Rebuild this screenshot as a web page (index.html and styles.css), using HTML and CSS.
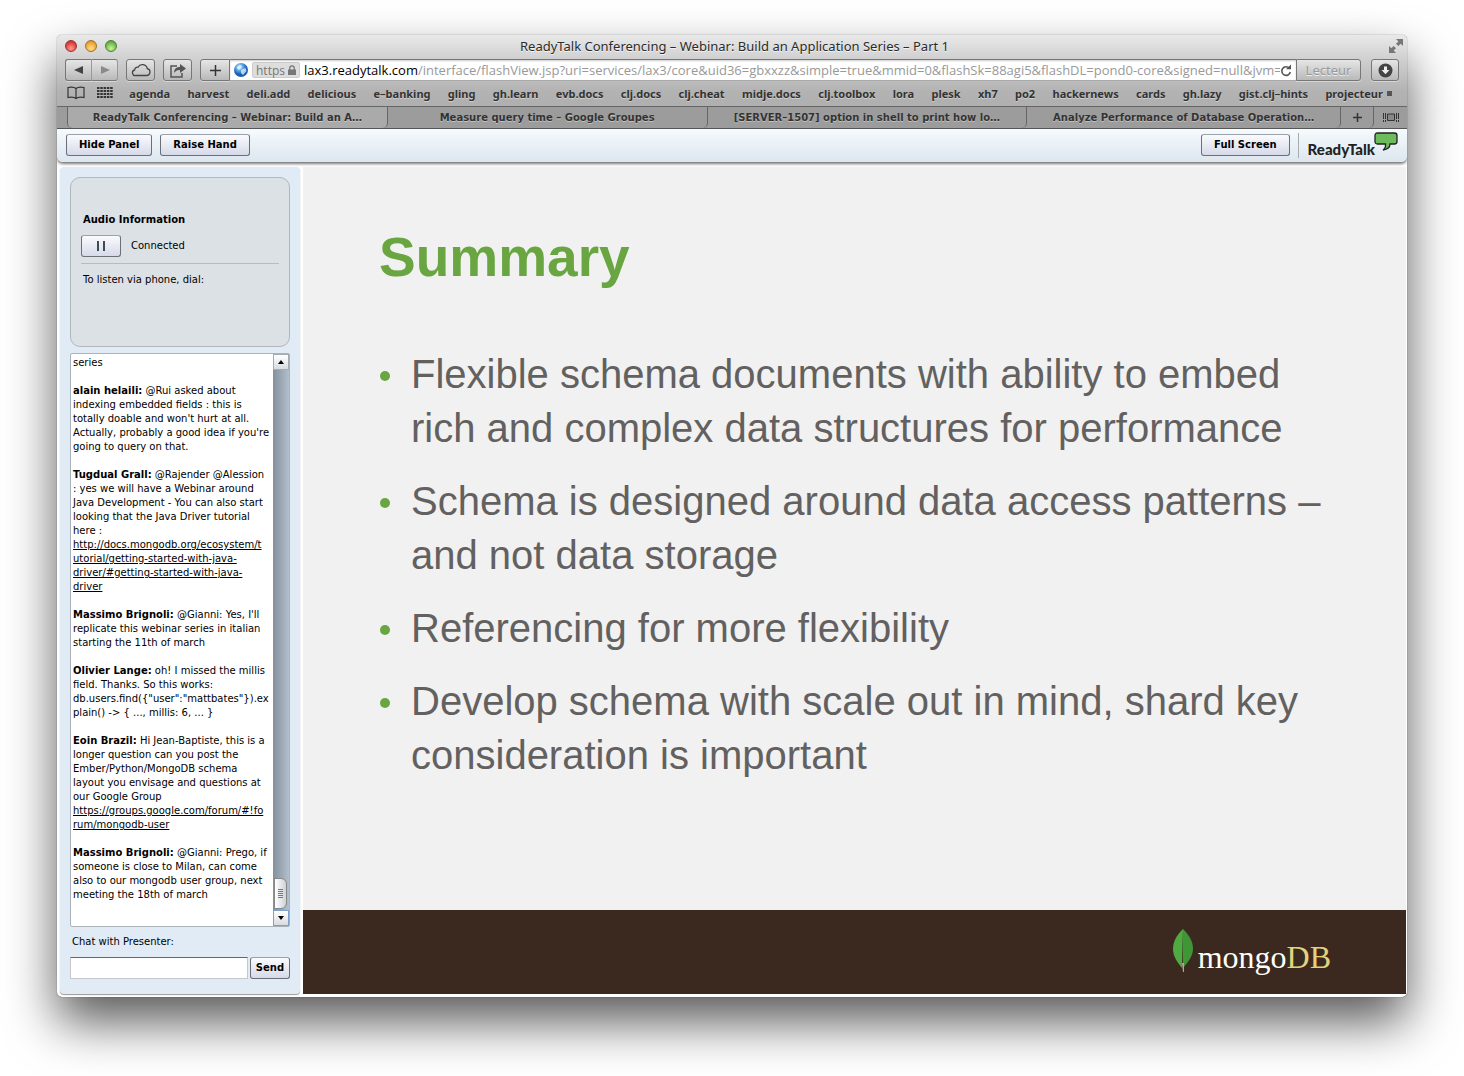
FILE: index.html
```html
<!DOCTYPE html>
<html lang="en">
<head>
<meta charset="utf-8">
<title>ReadyTalk Conferencing – Webinar: Build an Application Series – Part 1</title>
<link rel="stylesheet" href="styles.css">
</head>
<body>
<div class="window">
  <header class="chrome">
    <div class="titlebar">
      <div class="lights"><button class="light red" aria-label="Close"></button><button class="light amber" aria-label="Minimise"></button><button class="light green" aria-label="Zoom"></button></div>
      <h1 class="title">ReadyTalk Conferencing – Webinar: Build an Application Series – Part 1</h1>
      <button class="expand" aria-label="Full screen"><svg width="16" height="16" viewBox="0 0 16 16" fill="#777"><path d="M15 1v7l-2.300-2.300-2.400 2.400-2.300-2.300 2.400-2.400L8 1zM1 15V8l2.300 2.300 2.400-2.400L8 10.200l-2.400 2.400L8 15z"/></svg></button>
    </div>
    <div class="toolbar">
      <div class="nav">
        <button class="tool half" aria-label="Back"><svg width="10" height="10" viewBox="0 0 10 10"><path d="M9 1v8L0 5z" fill="#444"/></svg></button>
        <button class="tool half last" aria-label="Forward"><svg width="10" height="10" viewBox="0 0 10 10"><path d="M1 1v8l9-4z" fill="#8a8a8a"/></svg></button>
      </div>
      <button class="tool" aria-label="iCloud tabs"><svg width="20" height="14" viewBox="0 0 20 14"><path d="M5 12.500h10.500a3.500 3.500 0 0 0 .8-6.900A5 5 0 0 0 7 4.200 3 3 0 0 0 3.600 7 2.800 2.800 0 0 0 5 12.500z" fill="none" stroke="#444" stroke-width="1.300"/></svg></button>
      <button class="tool" aria-label="Share"><svg width="18" height="15" viewBox="0 0 18 15"><path d="M8 3H2v11h11v-4" fill="none" stroke="#555" stroke-width="1.500"/><path d="M5 10c0-4 2-6 6-6V1l6 4.500-6 4.500V7C8 7 6.500 8 5 10z" fill="#555"/></svg></button>
      <div class="address">
        <button class="tool add" aria-label="Add bookmark"><svg width="11" height="11" viewBox="0 0 11 11"><path d="M5.500 0v11M0 5.500h11" stroke="#333" stroke-width="1.500"/></svg></button>
        <label class="field" for="url">
          <svg width="14" height="14" viewBox="0 0 14 14"><defs><radialGradient id="globe" cx=".4" cy=".3"><stop offset="0" stop-color="#d8efff"/><stop offset=".5" stop-color="#5ea8e8"/><stop offset="1" stop-color="#1c5fae"/></radialGradient></defs><circle cx="7" cy="7" r="7" fill="url(#globe)"/><path d="M2.500 4.500l3-2.500 2.500 1-1.500 2.500-2 1.500zM7 7l4.500-2 1 3-3.500 4-2-2z" fill="#e4f5ff" opacity=".75"/></svg>
          <span class="secure">https <svg width="8" height="10" viewBox="0 0 8 10"><path d="M0 4.500h8V10H0z" fill="#777"/><path d="M1.800 5V3a2.200 2.200 0 0 1 4.400 0v2" fill="none" stroke="#777" stroke-width="1.300"/></svg></span>
          <span class="host">lax3.readytalk.com</span>
          <input id="url" class="path" type="text" value="/interface/flashView.jsp?uri=services/lax3/core&amp;uid36=gbxxzz&amp;simple=true&amp;mmid=0&amp;flashSk=88agi5&amp;flashDL=pond0-core&amp;signed=null&amp;jvm=">
          <svg width="12" height="13" viewBox="0 0 12 13"><path d="M9.300 4.200A4.300 4.300 0 1 0 10.300 8" fill="none" stroke="#555" stroke-width="1.600"/><path d="M6 5.200h5V.5z" fill="#555"/></svg>
        </label>
        <button class="tool reader">Lecteur</button>
      </div>
      <button class="tool download" aria-label="Downloads"><svg width="15" height="15" viewBox="0 0 15 15"><circle cx="7.500" cy="7.500" r="7" fill="#444"/><path d="M6 3.500h3V7h2.500l-4 4.300-4-4.300H6z" fill="#eee"/></svg></button>
    </div>
    <nav class="bookmarks">
      <div class="shortcuts">
        <a href="#" aria-label="Bookmarks"><svg width="18" height="14" viewBox="0 0 18 14"><path d="M9 2.500C7 .8 4 .8 1 1.500v10c3-.7 6-.7 8 1 2-1.700 5-1.700 8-1v-10C14 .8 11 .8 9 2.500v10" fill="none" stroke="#333" stroke-width="1.200"/></svg></a>
        <a href="#" aria-label="Top sites"><svg width="16" height="12" viewBox="0 0 16 12"><path d="M0 1h16M0 4h16M0 7h16M0 10h16" stroke="#333" stroke-width="2" stroke-dasharray="2.500 .8"/></svg></a>
      </div>
      <a href="#">agenda</a><a href="#">harvest</a><a href="#">deli.add</a><a href="#">delicious</a><a href="#">e–banking</a><a href="#">gling</a><a href="#">gh.learn</a><a href="#">evb.docs</a><a href="#">clj.docs</a><a href="#">clj.cheat</a><a href="#">midje.docs</a><a href="#">clj.toolbox</a><a href="#">lora</a><a href="#">plesk</a><a href="#">xh7</a><a href="#">po2</a><a href="#">hackernews</a><a href="#">cards</a><a href="#">gh.lazy</a><a href="#">gist.clj–hints</a><a href="#" class="folder">projecteur</a>
    </nav>
    <nav class="tabs">
      <a class="tab active" href="#">ReadyTalk Conferencing – Webinar: Build an A…</a>
      <a class="tab" href="#">Measure query time – Google Groupes</a>
      <a class="tab" href="#">[SERVER–1507] option in shell to print how lo…</a>
      <a class="tab final" href="#">Analyze Performance of Database Operation…</a>
      <button class="tab small" aria-label="New tab"><svg width="9" height="9" viewBox="0 0 9 9"><path d="M4.500 0v9M0 4.500h9" stroke="#333" stroke-width="1.500"/></svg></button>
      <button class="tab small end" aria-label="All tabs"><svg width="16" height="9" viewBox="0 0 16 9"><path d="M.5 0v6M.5 7v2M2.500 0v6M2.500 7v2M13.500 0v6M13.500 7v2M15.500 0v6M15.500 7v2" stroke="#333"/><path d="M4.500 1h7v6.500h-7z" fill="#888" stroke="#333"/></svg></button>
    </nav>
  </header>

  <div class="appbar">
    <button class="btn">Hide Panel</button>
    <button class="btn">Raise Hand</button>
    <button class="btn push">Full Screen</button>
    <div class="brand"><span>ReadyTalk</span><svg width="24" height="19" viewBox="0 0 24 19"><path d="M3.500 1h17Q23 1 23 3.500v6Q23 12 20.500 12H16q0 5-7 6 3-2 2.500-6h-8Q1 12 1 9.500v-6Q1 1 3.500 1z" fill="#6dbb5d" stroke="#222" stroke-width="1.300"/></svg></div>
  </div>

  <main class="content">
    <aside class="panel">
      <section class="audio">
        <h2>Audio Information</h2>
        <div class="status"><button class="btn pause" aria-label="Pause"><svg width="8" height="10" viewBox="0 0 8 10"><path d="M1 0v10M7 0v10" stroke="#123" stroke-width="1.600"/></svg></button><span>Connected</span></div>
        <p class="dial">To listen via phone, dial:</p>
      </section>
      <section class="chat">
        <div class="messages">
          <p>series</p>
          <p><b>alain helaili:</b> @Rui asked about<br>indexing embedded fields : this is<br>totally doable and won't hurt at all.<br>Actually, probably a good idea if you're<br>going to query on that.</p>
          <p><b>Tugdual Grall:</b> @Rajender @Alession<br>: yes we will have a Webinar around<br>Java Development - You can also start<br>looking that the Java Driver tutorial<br>here :<br><a href="#">http://docs.mongodb.org/ecosystem/t<br>utorial/getting-started-with-java-<br>driver/#getting-started-with-java-<br>driver</a></p>
          <p><b>Massimo Brignoli:</b> @Gianni: Yes, I'll<br>replicate this webinar series in italian<br>starting the 11th of march</p>
          <p><b>Olivier Lange:</b> oh! I missed the millis<br>field. Thanks. So this works:<br>db.users.find({"user":"mattbates"}).ex<br>plain() -&gt; { ..., millis: 6, ... }</p>
          <p><b>Eoin Brazil:</b> Hi Jean-Baptiste, this is a<br>longer question can you post the<br>Ember/Python/MongoDB schema<br>layout you envisage and questions at<br>our Google Group<br><a href="#">https://groups.google.com/forum/#!fo<br>rum/mongodb-user</a></p>
          <p><b>Massimo Brignoli:</b> @Gianni: Prego, if<br>someone is close to Milan, can come<br>also to our mongodb user group, next<br>meeting the 18th of march</p>
        </div>
        <div class="scroll">
          <button class="arrow" aria-label="Scroll up"><svg width="6" height="4" viewBox="0 0 6 4"><path d="M0 4l3-4 3 4z"/></svg></button>
          <div class="thumb"><i></i></div>
          <button class="arrow down" aria-label="Scroll down"><svg width="6" height="4" viewBox="0 0 6 4"><path d="M0 0l3 4 3-4z"/></svg></button>
        </div>
      </section>
      <label class="ask" for="message">Chat with Presenter:</label>
      <div class="compose"><input id="message" type="text"><button class="btn send">Send</button></div>
    </aside>
    <article class="slide">
      <div class="body">
        <h2>Summary</h2>
        <ul>
          <li>Flexible schema documents with ability to embed<br>rich and complex data structures for performance</li>
          <li>Schema is designed around data access patterns –<br>and not data storage</li>
          <li>Referencing for more flexibility</li>
          <li>Develop schema with scale out in mind, shard key<br>consideration is important</li>
        </ul>
      </div>
      <footer class="foot">
        <svg width="22" height="44" viewBox="0 0 22 44"><path d="M11 0C4 7 1 13 1 20s4 13 9 19z" fill="#4faa41"/><path d="M11 0c7 7 10 13 10 20s-5 13-10 19z" fill="#3f9636"/><path d="M10 34h2v9h-1z" fill="#b5a98c"/></svg>
        <span>mongo<em>DB</em></span>
      </footer>
    </article>
  </main>
</div>
</body>
</html>
```
FILE: styles.css
```css
* { box-sizing: border-box; margin: 0; padding: 0; }
body {
  background: #fff;
  padding: 35px 57px 79px;
  font-family: "DejaVu Sans", Verdana, sans-serif;
  font-size: 10px;
  color: #000;
}
button { font: inherit; color: inherit; border: 0; background: none; }
svg { display: block; flex: none; }
.window {
  display: flex;
  flex-direction: column;
  min-height: calc(100vh - 114px);
  background: #fff;
  border-radius: 5px;
  overflow: hidden;
  box-shadow: 0 0 1px rgba(0, 0, 0, .8), 0 25px 50px rgba(0, 0, 0, .65);
}

/* browser chrome */
.chrome {
  font-family: "Noto Sans", "Lucida Grande", sans-serif;
  background: linear-gradient(#e9e9e9, #d0d0d0 24px, #b3b3b3 56px, #a9a9a9);
}
.titlebar { display: flex; align-items: center; height: 24px; padding: 0 3px 2px 8px; }
.lights { display: flex; gap: 8px; width: 100px; }
.light { width: 12px; height: 12px; border-radius: 50%; border: 1px solid; }
.red { background: radial-gradient(circle at 50% 75%, #ff9b93, #e0443e 60%, #b52f2b); border-color: #9a3030; }
.amber { background: radial-gradient(circle at 50% 75%, #ffe08a, #f0a83c 60%, #c77f22); border-color: #a1702c; }
.green { background: radial-gradient(circle at 50% 75%, #c9f29a, #74bb4e 60%, #4b8f33); border-color: #4e7f3a; }
.title { flex: 1; text-align: center; font-size: 13px; font-weight: 400; color: #2b2b2b; text-shadow: 0 1px 0 #f4f4f4; white-space: nowrap; }
.expand { width: 100px; display: flex; justify-content: flex-end; }
.toolbar { display: flex; gap: 8px; height: 23px; padding: 0 8px; }
.tool {
  display: flex;
  align-items: center;
  justify-content: center;
  width: 29px;
  height: 22px;
  border: 1px solid #777;
  border-radius: 3px;
  background: linear-gradient(#e6e6e6, #b9b9b9);
  box-shadow: 0 1px 0 rgba(255, 255, 255, .4);
}
.nav { display: flex; }
.half { width: 27px; border-radius: 3px 0 0 3px; border-right-color: #999; }
.half.last { width: 26px; border-radius: 0 3px 3px 0; border-left: 0; }
.address { flex: 1; min-width: 0; display: flex; }
.add { width: 30px; border-radius: 3px 0 0 3px; }
.field {
  flex: 1;
  min-width: 0;
  display: flex;
  align-items: center;
  height: 22px;
  padding: 0 4px;
  background: #fff;
  border: 1px solid #777;
  border-width: 1px 0;
  border-bottom-color: #aaa;
  font-family: "Open Sans", sans-serif;
  font-size: 13px;
  box-shadow: inset 0 1px 2px rgba(0, 0, 0, .2);
}
.secure {
  display: flex;
  align-items: center;
  gap: 3px;
  margin: 0 4px;
  padding: 0 3px;
  height: 16px;
  background: #ddd;
  border: 1px solid #ccc;
  border-radius: 2px;
  font-size: 12px;
  color: #777;
}
.path { flex: 1; min-width: 0; border: 0; outline: 0; background: none; font: inherit; color: #999; }
.reader { width: 65px; border-radius: 0 3px 3px 0; font-size: 13px; color: #999; text-shadow: 0 1px 0 #eee; }
.download { width: 28px; margin-left: 2px; }
.bookmarks { display: flex; align-items: center; justify-content: space-between; height: 24px; padding: 0 15px 2px 10px; }
.shortcuts { display: flex; align-items: center; gap: 12px; width: 45px; }
.bookmarks a, .tab { color: #333; font-size: 11px; font-weight: 700; text-decoration: none; white-space: nowrap; text-shadow: 0 1px 0 rgba(255, 255, 255, .4); }
.folder::after { content: ""; display: inline-block; width: 5px; height: 5px; margin: 0 0 2px 4px; background: #555; }
.tabs { display: flex; height: 23px; padding-left: 10px; background: #9c9c9c; border-top: 1px solid #666; border-bottom: 1px solid #555; }
.tab {
  flex: 320 1 0;
  min-width: 0;
  display: flex;
  align-items: center;
  justify-content: center;
  border-right: 1px solid #666;
  border-radius: 0 0 5px 0;
  font-family: "DejaVu Sans", sans-serif;
  font-size: 10px;
}
.tab.active { background: #aaa; border-left: 1px solid #666; border-radius: 0 0 5px 5px; }
.tab.final { flex-grow: 314; }
.tab.small { flex: 0 0 33px; }
.tab.end { border-right: 0; }

/* conference toolbar */
.appbar {
  position: relative;
  display: flex;
  align-items: flex-start;
  gap: 8px;
  height: 33px;
  padding: 5px 9px 0;
  background: linear-gradient(#f5fbfe, #dde6ef);
  border-radius: 0 0 6px 6px;
  box-shadow: 0 2px 3px #777;
}
.btn {
  height: 22px;
  padding: 0 12px 2px;
  border: 1px solid #6b7078;
  border-top-color: #9ba2ab;
  border-radius: 3px;
  background: linear-gradient(#fafbfd, #d6dae9);
  font-size: 10px;
  font-weight: 700;
  white-space: nowrap;
}
.push { margin-left: auto; }
.brand {
  display: flex;
  height: 25px;
  margin-top: -1px;
  padding-left: 9px;
  border-left: 1px solid #aaa;
  font: 900 15px/33px Lato, sans-serif;
  color: #222;
}
.brand svg { margin: -1px 0 0 -1px; }

/* side panel */
.content { flex: 1; display: flex; gap: 3px; padding: 5px 1px 3px 3px; }
.panel {
  flex: 0 0 240px;
  display: flex;
  flex-direction: column;
  padding: 10px 10px 15px;
  background: #e1ebf6;
  border-radius: 4px;
  box-shadow: 0 1px 1px #999;
}
.audio {
  height: 170px;
  padding: 35px 10px 0;
  background: #dce1e5;
  border: 1px solid #b1b7bb;
  border-radius: 10px;
}
.audio h2 { padding-left: 2px; font-size: 10px; line-height: 14px; }
.status { display: flex; align-items: center; gap: 10px; padding: 8px 0 6px; border-bottom: 1px solid #bbb; }
.status span { padding-bottom: 2px; }
.pause { display: flex; align-items: center; justify-content: center; width: 40px; padding: 0; }
.dial { padding: 9px 2px; line-height: 14px; }
.chat {
  flex: 1;
  display: flex;
  margin-top: 6px;
  background: #fff;
  border: 1px solid #aab3ba;
  border-radius: 2px;
}
.messages { flex: 1; min-width: 0; padding: 2px; line-height: 14px; white-space: nowrap; }
.messages p + p { margin-top: 14px; }
.messages a { color: #000; }
.scroll {
  flex: 0 0 16px;
  display: flex;
  flex-direction: column;
  background: linear-gradient(90deg, #84909c, #b2bfcc);
}
.arrow { display: flex; align-items: center; justify-content: center; height: 16px; background: linear-gradient(#fff, #d8dce0); border: 1px solid #a5abb1; }
.arrow.down { border-color: #7aa2cc; }
.thumb { display: flex; align-items: center; justify-content: center; height: 31px; margin: auto 2px 1px 1px; border: 1px solid #888; border-radius: 0 6px 6px 0; background: linear-gradient(90deg, #fff, #cdd2da); }
.thumb i { width: 5px; height: 9px; background: repeating-linear-gradient(#777 0 1px, transparent 1px 2px); }
.ask { padding: 8px 2px; line-height: 14px; }
.compose { display: flex; gap: 2px; }
.compose input { flex: 1; min-width: 0; height: 22px; padding: 0 4px; border: 1px solid #c4c8cc; border-top-color: #666; font: inherit; }
.send { width: 40px; padding: 0 0 2px; }

/* slide */
.slide { flex: 1; min-width: 0; display: flex; flex-direction: column; background: #f1f1f1; }
.body { flex: 1; padding: 58px 24px 0 76px; font-family: "Liberation Sans", Arial, sans-serif; }
.body h2 { font-size: 55px; line-height: 64px; color: #69a541; }
.body ul { display: flex; flex-direction: column; gap: 19px; margin-top: 58px; list-style: none; }
.body li { position: relative; padding-left: 32px; font-size: 40px; line-height: 54px; color: #636060; white-space: nowrap; }
.body li::before { content: ""; position: absolute; left: 1px; top: 24px; width: 10px; height: 10px; border-radius: 50%; background: #69a541; }
.foot { display: flex; justify-content: flex-end; height: 84px; padding: 19px 75px 0 0; background: #3b2920; }
.foot span { margin-left: 4px; font: 32px/56px "Liberation Serif", serif; color: #fff; }
.foot em { font-style: normal; color: #e2d37c; }
```
